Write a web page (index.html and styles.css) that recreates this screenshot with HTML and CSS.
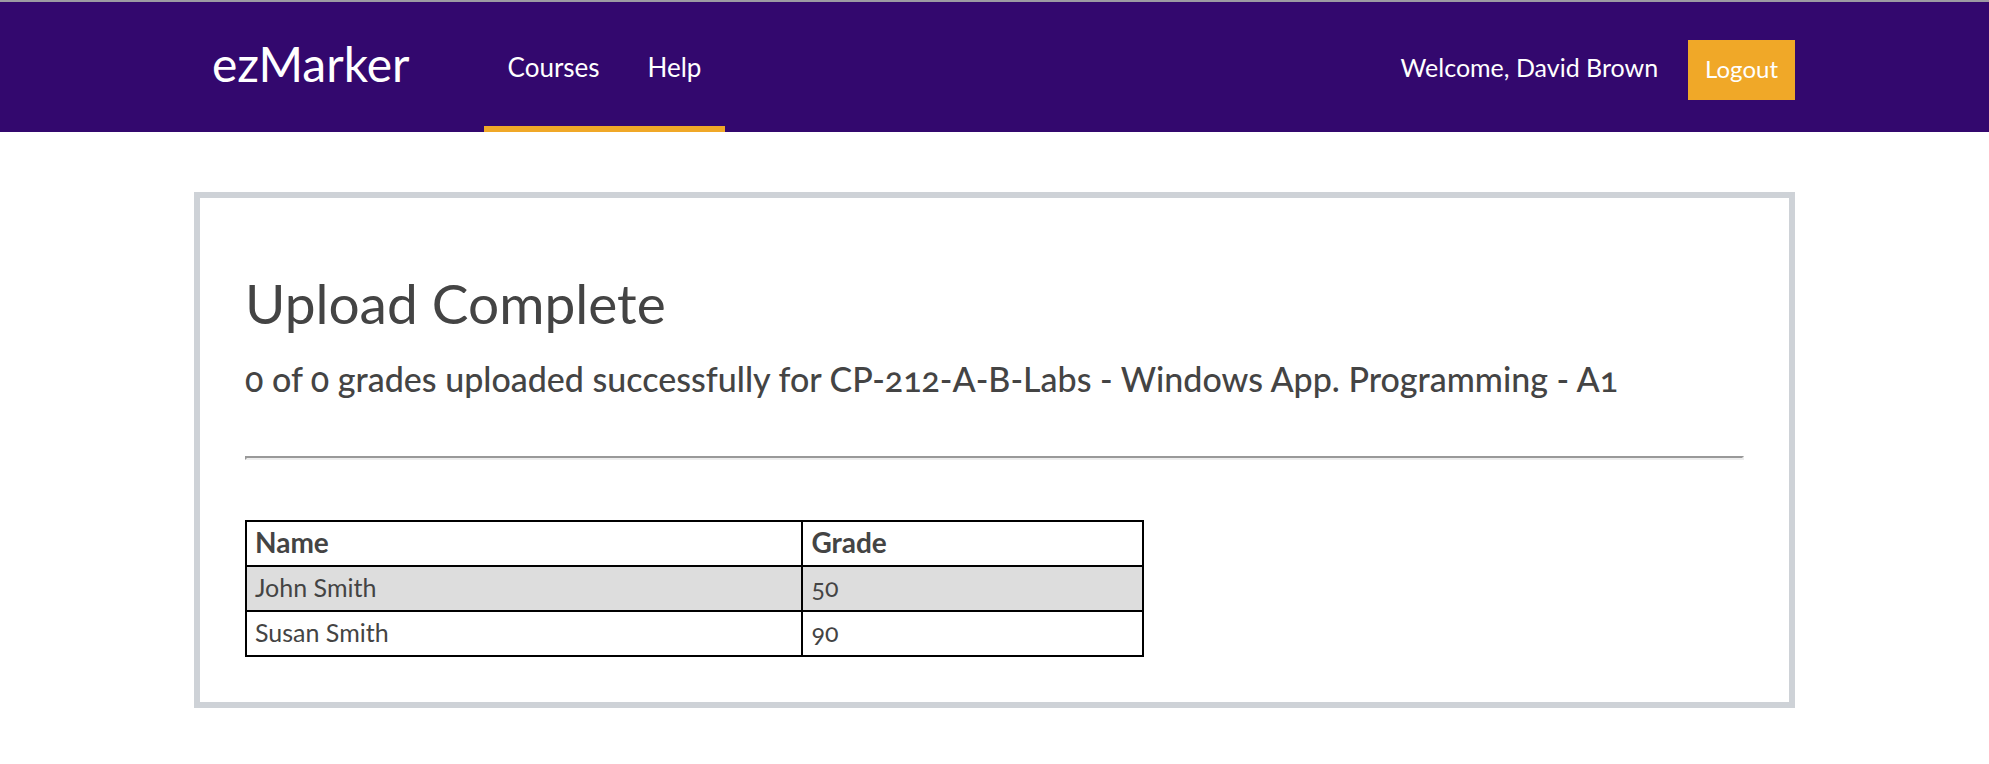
FILE: index.html
```html
<!DOCTYPE html>
<html lang="en">
<head>
<meta charset="utf-8">
<title>ezMarker - Upload Complete</title>
<link rel="stylesheet" href="styles.css">
</head>
<body>
<header class="site-header">
  <div class="container header-row">
    <a class="logo" href="#">ezMarker</a>
    <nav class="main-nav">
      <a class="nav-link" href="#">Courses</a>
      <a class="nav-link" href="#">Help</a>
    </nav>
    <span class="welcome">Welcome, David Brown</span>
    <button class="logout" type="button">Logout</button>
  </div>
</header>
<main class="container card">
  <h1 class="title">Upload Complete</h1>
  <h2 class="summary">0 of 0 grades uploaded successfully for CP-212-A-B-Labs - Windows App. Programming - A1</h2>
  <hr class="divider">
  <table class="grades">
    <thead>
      <tr><th class="name-col" scope="col">Name</th><th scope="col">Grade</th></tr>
    </thead>
    <tbody>
      <tr><td>John Smith</td><td>50</td></tr>
      <tr><td>Susan Smith</td><td>90</td></tr>
    </tbody>
  </table>
</main>
</body>
</html>
```
FILE: styles.css
```css
* {
  box-sizing: border-box;
}

body {
  margin: 0;
  background: #fff;
  color: #444;
  font-family: Lato, "Open Sans", sans-serif;
  font-size: 25px;
  line-height: 30px;
  font-variant-numeric: oldstyle-nums;
}

.container {
  width: calc(100% - 48px);
  max-width: 1601px;
  margin: 0 auto;
}

.site-header {
  background: #33086e;
  border-top: 2px solid #9d9ba3;
  color: #fff;
}

.header-row {
  display: flex;
  align-items: stretch;
  height: 130px;
}

.logo {
  margin: 33px 74px 0 18px;
  color: inherit;
  font-size: 48px;
  line-height: 58px;
  text-decoration: none;
}

.main-nav {
  display: flex;
  gap: 48px;
  padding: 50px 24px 0;
  border-bottom: 6px solid #f0a828;
  font-size: 26px;
}

.nav-link {
  color: inherit;
  text-decoration: none;
}

.welcome {
  margin: 50px 30px 0 auto;
}

.logout {
  align-self: flex-start;
  margin-top: 38px;
  padding: 14px 17px 16px;
  border: 0;
  background: #f0a828;
  color: #fff;
  font: inherit;
  font-size: 24px;
  line-height: 30px;
}

.card {
  margin-top: 60px;
  padding: 75px 45px 45px;
  border: 6px solid #ced2d7;
}

.title {
  margin: 0;
  font-size: 55px;
  font-weight: 400;
  line-height: 60px;
}

.summary {
  margin: 30px 0 61px;
  font-size: 34px;
  font-weight: 500;
  line-height: 32px;
}

.divider {
  height: 4px;
  margin: 0 0 60px;
  border: 2px solid;
  border-color: #999 #eee #eee #999;
}

.grades {
  width: 60%;
  border-collapse: collapse;
  table-layout: fixed;
}

.grades th,
.grades td {
  padding: 5px 8px 8px;
  border: 2px solid #000;
  text-align: left;
}

.grades th {
  font-size: 28px;
}

.name-col {
  width: 62%;
}

.grades tbody tr:nth-child(odd) {
  background: #ddd;
}
```
